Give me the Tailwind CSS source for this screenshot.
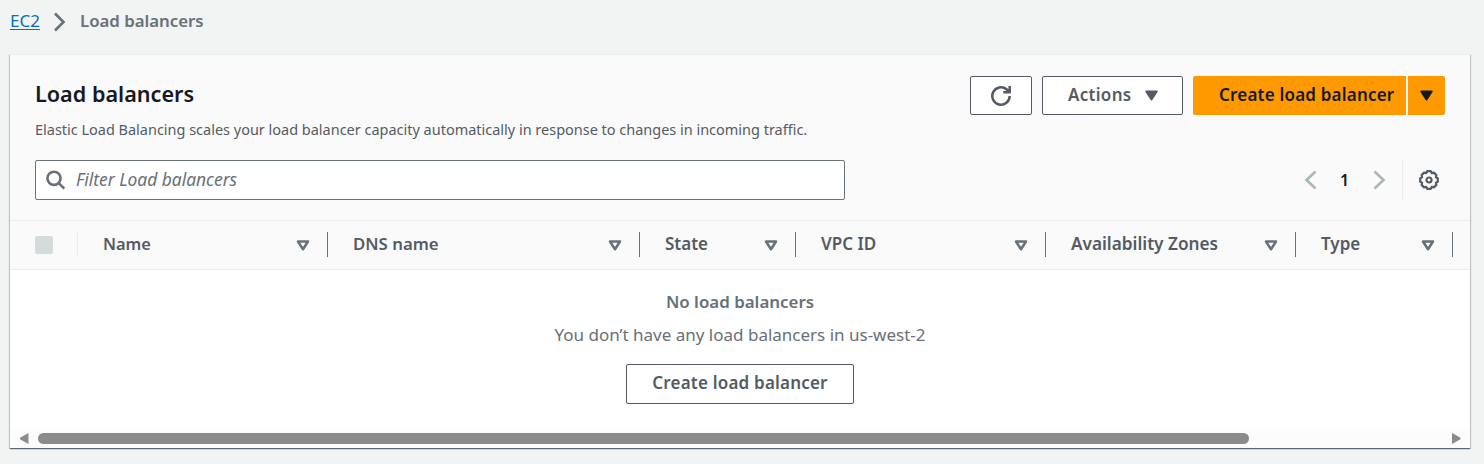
<!DOCTYPE html>
<html lang="en">
<head>
<meta charset="utf-8">
<title>Load balancers | EC2</title>
<script src="https://cdn.jsdelivr.net/npm/@tailwindcss/browser@4"></script>
</head>
<body class="h-[464px] overflow-hidden bg-[#f2f3f3] font-['Noto_Sans',sans-serif] text-[17px] text-[#545b64]">
<nav class="flex h-[54px] items-start pt-[9px] pl-[10px] leading-6">
  <a href="#" class="w-[31px] whitespace-nowrap text-[#0073bb] underline underline-offset-2">EC2</a>
  <svg class="mt-[3px] ml-[12px] h-5 w-[14px]" viewBox="0 0 14 20" fill="none" stroke="#687078" stroke-width="2.6"><path d="M2 1.500 10.500 10 2 18.500"/></svg>
  <span class="ml-[13px] text-[16.8px] font-semibold whitespace-nowrap text-[#687078]">Load balancers</span>
</nav>
<main class="mx-[10px] flex h-[394px] w-[1460px] flex-col border-t border-[#eaeded] bg-white shadow-[0_1px_1px_0_rgba(0,28,36,0.5),1px_1px_1px_0_rgba(0,28,36,0.15),-1px_1px_1px_0_rgba(0,28,36,0.15)]">
  <header class="h-[165px] bg-[#fafafa] px-[25px] pt-[21px]">
    <div class="flex h-[84px] justify-between">
      <div>
        <h1 class="mt-[2px] text-[21.6px] leading-8 font-semibold whitespace-nowrap text-[#16191f]">Load balancers</h1>
        <p class="mt-[8px] text-[14.47px] leading-6 whitespace-nowrap">Elastic Load Balancing scales your load balancer capacity automatically in response to changes in incoming traffic.</p>
      </div>
      <div class="flex h-[39px] text-[17px] leading-6 font-semibold whitespace-nowrap">
        <button class="flex w-[62px] items-center justify-center rounded-[2px] border border-[#545b64] bg-white">
          <svg class="h-5 w-5" viewBox="0 0 20 20" fill="none" stroke="#545b64" stroke-width="2.500"><path d="M18.700 10A8.700 8.700 0 1 1 15.500 3.250L18.500 5.800M18.700 0V6.200H12.300"/></svg>
        </button>
        <button class="ml-[10px] flex w-[141px] items-center rounded-[2px] border border-[#545b64] bg-white pl-[25px]">
          <span class="w-[64px] pb-[2px] text-left tracking-[0.3px]">Actions</span>
          <svg class="ml-[13px] h-[11px] w-[13px]" viewBox="0 0 13 11" fill="#545b64" stroke="#545b64" stroke-linejoin="round" stroke-width="2"><path d="M1.300 1.500H11.700L6.500 9.500Z"/></svg>
        </button>
        <button class="ml-[10px] w-[213px] rounded-l-[2px] bg-[#ff9900] pb-[2px] pl-[26px] text-left tracking-[0.2px] text-[#16191f]">Create load balancer</button>
        <button class="ml-[2px] flex w-[37px] items-center justify-center rounded-r-[2px] bg-[#ff9900]">
          <svg class="h-[11px] w-[13px]" viewBox="0 0 13 11" fill="#16191f" stroke="#16191f" stroke-linejoin="round" stroke-width="2"><path d="M1.300 1.500H11.700L6.500 9.500Z"/></svg>
        </button>
      </div>
    </div>
    <div class="flex h-10 items-center">
      <div class="flex h-10 w-[810px] items-center rounded-[2px] border border-[#687078] bg-white pl-[10px] text-[#687078]">
        <svg class="h-5 w-5" viewBox="0 0 20 20" fill="none" stroke="#687078" stroke-width="2.600"><circle cx="8" cy="8.300" r="6.600"/><path d="M12.800 13.100 18.300 18.600"/></svg>
        <span class="ml-[10px] pb-[2px] text-[17.400px] leading-6 whitespace-nowrap italic">Filter Load balancers</span>
      </div>
      <svg class="ml-[459px] h-5 w-[13px]" viewBox="0 0 13 20" fill="none" stroke="#aab7b8" stroke-width="2.600"><path d="M11.500 1.500 2.500 10 11.500 18.500"/></svg>
      <span class="ml-[18px] w-[19px] text-center text-[16px] font-semibold text-[#16191f]">1</span>
      <svg class="ml-[19px] h-5 w-[13px]" viewBox="0 0 13 20" fill="none" stroke="#aab7b8" stroke-width="2.600"><path d="M1.500 1.500 10.500 10 1.500 18.500"/></svg>
      <div class="ml-[16px] h-[39px] w-px bg-[#eaeded]"></div>
      <svg class="ml-[16px] h-5 w-5" viewBox="0 0 20 20" fill="none" stroke="#545b64" stroke-width="2.200" stroke-linejoin="round"><path d="M8.200 1.200H11.800L12.700 3.100L14.900 2.600L17.400 5.100L16.900 7.300L18.800 8.200V11.800L16.900 12.700L17.400 14.900L14.900 17.400L12.700 16.900L11.800 18.800H8.200L7.300 16.900L5.100 17.400L2.600 14.900L3.100 12.700L1.200 11.800V8.200L3.100 7.300L2.600 5.100L5.100 2.600L7.300 3.100Z"/><circle cx="10" cy="10" r="2.500"/></svg>
    </div>
  </header>
  <div class="flex h-[50px] items-start overflow-hidden border-y border-[#eaeded] bg-[#fafafa] pt-[11px] leading-[23px] font-semibold whitespace-nowrap">
    <div class="flex h-[25px] w-[68px] shrink-0 items-center border-r border-[#eaeded] pl-[25px]"><i class="mt-px block size-[18px] rounded-[2px] bg-[#d5dbdb]"></i></div>
    <div class="flex h-[25px] w-[250px] shrink-0 justify-between border-r border-[#687078] pr-[17px] pl-[25px]"><span class="text-[16.400px]">Name</span><svg class="mt-[8px] h-[11px] w-[14px]" viewBox="0 0 14 11" fill="none" stroke="#687078" stroke-width="2.500" stroke-linejoin="round"><path d="M2 1.500H12L7 9.200Z"/></svg></div>
    <div class="flex h-[25px] w-[312px] shrink-0 justify-between border-r border-[#687078] pr-[17px] pl-[25px]"><span class="text-[16.800px]">DNS name</span><svg class="mt-[8px] h-[11px] w-[14px]" viewBox="0 0 14 11" fill="none" stroke="#687078" stroke-width="2.500" stroke-linejoin="round"><path d="M2 1.500H12L7 9.200Z"/></svg></div>
    <div class="flex h-[25px] w-[156px] shrink-0 justify-between border-r border-[#687078] pr-[17px] pl-[25px]"><span>State</span><svg class="mt-[8px] h-[11px] w-[14px]" viewBox="0 0 14 11" fill="none" stroke="#687078" stroke-width="2.500" stroke-linejoin="round"><path d="M2 1.500H12L7 9.200Z"/></svg></div>
    <div class="flex h-[25px] w-[250px] shrink-0 justify-between border-r border-[#687078] pr-[17px] pl-[25px]"><span>VPC ID</span><svg class="mt-[8px] h-[11px] w-[14px]" viewBox="0 0 14 11" fill="none" stroke="#687078" stroke-width="2.500" stroke-linejoin="round"><path d="M2 1.500H12L7 9.200Z"/></svg></div>
    <div class="flex h-[25px] w-[250px] shrink-0 justify-between border-r border-[#687078] pr-[17px] pl-[25px]"><span class="text-[17.200px]">Availability Zones</span><svg class="mt-[8px] h-[11px] w-[14px]" viewBox="0 0 14 11" fill="none" stroke="#687078" stroke-width="2.500" stroke-linejoin="round"><path d="M2 1.500H12L7 9.200Z"/></svg></div>
    <div class="flex h-[25px] w-[157px] shrink-0 justify-between border-r border-[#687078] pr-[17px] pl-[25px]"><span>Type</span><svg class="mt-[8px] h-[11px] w-[14px]" viewBox="0 0 14 11" fill="none" stroke="#687078" stroke-width="2.500" stroke-linejoin="round"><path d="M2 1.500H12L7 9.200Z"/></svg></div>
  </div>
  <section class="flex h-[159px] flex-col items-center pt-[20px] text-[#687078]">
    <b class="text-[16.9px] leading-6 font-semibold">No load balancers</b>
    <p class="mt-[9px] leading-6">You don’t have any load balancers in us-west-2</p>
    <button class="mt-[17px] h-10 w-[228px] rounded-[2px] border border-[#545b64] bg-white pb-[2px] leading-6 font-semibold tracking-[0.2px] whitespace-nowrap text-[#545b64]">Create load balancer</button>
  </section>
  <div class="flex h-[19px] items-center bg-[#fcfcfc] pl-[10px]">
    <svg class="h-[11px] w-[9px]" viewBox="0 0 9 11" fill="#8b8b8b"><path d="M8.500 0V11L0 6.200V4.800Z"/></svg>
    <div class="ml-[9px] h-[11px] w-[1211px] rounded-full bg-[#8b8b8b]"></div>
    <svg class="ml-[203px] h-[11px] w-[9px]" viewBox="0 0 9 11" fill="#8b8b8b"><path d="M0 0V11L8.500 6.200V4.800Z"/></svg>
  </div>
</main>
</body>
</html>
